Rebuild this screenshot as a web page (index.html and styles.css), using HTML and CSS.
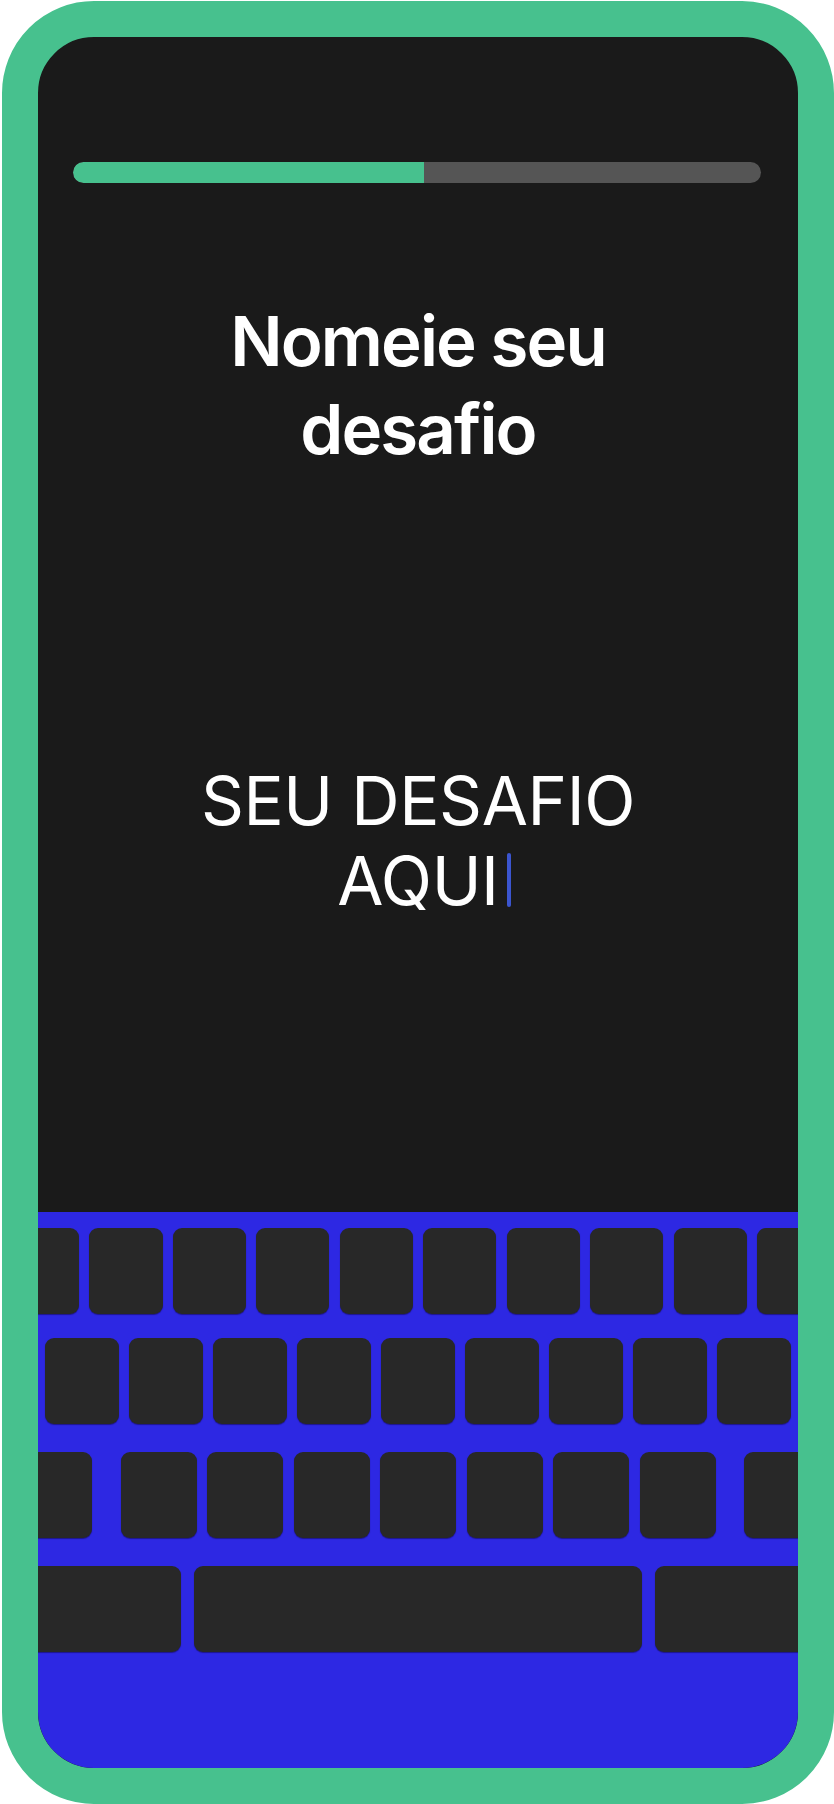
FILE: index.html
```html
<!DOCTYPE html>
<html lang="pt">
<head>
<meta charset="utf-8">
<title>Nomeie seu desafio</title>
<link rel="stylesheet" href="styles.css">
</head>
<body>
<div class="device">
  <div class="screen">
    <div class="progress"><div class="progress-fill" style="width:51%"></div></div>
    <h1 class="title">Nomeie seu desafio</h1>
    <div class="input">SEU DESAFIO<br>AQUI<span class="caret"></span></div>
    <div class="keyboard">
      <div class="row row-1">
        <div class="key"></div><div class="key"></div><div class="key"></div><div class="key"></div><div class="key"></div>
        <div class="key"></div><div class="key"></div><div class="key"></div><div class="key"></div><div class="key"></div>
      </div>
      <div class="row row-2">
        <div class="key"></div><div class="key"></div><div class="key"></div><div class="key"></div><div class="key"></div>
        <div class="key"></div><div class="key"></div><div class="key"></div><div class="key"></div>
      </div>
      <div class="row row-3">
        <div class="key key-mod key-shift"></div>
        <div class="key"></div><div class="key"></div><div class="key"></div><div class="key"></div>
        <div class="key"></div><div class="key"></div><div class="key"></div>
        <div class="key key-mod key-back"></div>
      </div>
      <div class="row row-4">
        <div class="key key-side"></div>
        <div class="key key-space"></div>
        <div class="key key-side"></div>
      </div>
    </div>
  </div>
</div>
</body>
</html>
```

FILE: styles.css
```css
html, body {
  margin: 0;
  padding: 0;
  background: #ffffff;
  overflow: hidden;
}

body {
  width: 834px;
  height: 1804px;
  font-family: Inter, "Noto Sans", sans-serif;
}

.device {
  box-sizing: border-box;
  margin: 1px 0 0 2px;
  width: 832px;
  height: 1803px;
  border: 36px solid #47c18e;
  border-radius: 92px;
  background: #1a1a1a;
  overflow: hidden;
}

.screen {
  height: 100%;
  display: flex;
  flex-direction: column;
}

.progress {
  margin: 125px 37px 0 35px;
  height: 21px;
  border-radius: 11px;
  background: #555555;
  overflow: hidden;
  flex: none;
}

.progress-fill {
  height: 100%;
  background: #47c18e;
  border-radius: 11px 0 0 11px;
}

.title {
  margin: 114px auto 0;
  max-width: 440px;
  color: #ffffff;
  font-family: Inter, "Noto Sans", sans-serif;
  font-weight: 600;
  font-size: 69px;
  line-height: 88px;
  letter-spacing: -1.9px;
  text-align: center;
}

.input {
  margin-top: 288px;
  color: #ffffff;
  font-family: Inter, "Noto Sans", sans-serif;
  font-weight: 400;
  font-size: 67px;
  line-height: 80px;
  letter-spacing: -0.4px;
  text-align: center;
}

.caret {
  display: inline-block;
  width: 4px;
  height: 54px;
  margin-left: 8px;
  margin-right: -12px;
  vertical-align: -2px;
  border-radius: 2px;
  background: #3b55cf;
}

.keyboard {
  margin-top: auto;
  flex: none;
  height: 556px;
  box-sizing: border-box;
  padding-top: 16px;
  background: #2d28e3;
  display: flex;
  flex-direction: column;
  overflow: hidden;
}

.row {
  display: flex;
  justify-content: center;
  gap: 10.1px;
  height: 86px;
  flex: none;
}

.row-2 { margin-top: 24px; }
.row-3 { margin-top: 28px; gap: 10.5px; }
.row-4 { margin-top: 28px; gap: 13px; }

.key {
  flex: none;
  width: 73.4px;
  height: 86px;
  border-radius: 9px;
  background: #282828;
  box-shadow: 0 1px 1px rgba(20, 10, 80, 0.6);
}

.row-2 .key { width: 74px; }
.row-3 .key { width: 76px; }

.row-3 .key-mod { width: 110px; }
.row-3 .key-shift { margin-right: 18px; }
.row-3 .key-back { margin-left: 18px; }

.row-4 .key-side { width: 180px; }
.row-4 .key-space { width: 448px; }
```
